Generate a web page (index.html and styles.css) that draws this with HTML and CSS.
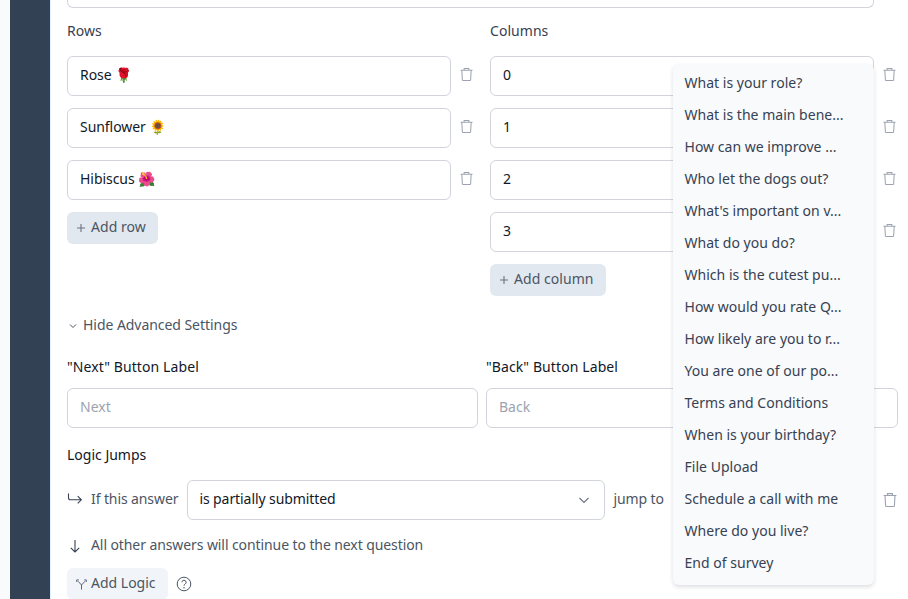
FILE: index.html
```html
<!DOCTYPE html>
<html lang="en">
<head>
<meta charset="utf-8">
<title>Matrix question settings</title>
<link rel="stylesheet" href="styles.css">
</head>
<body>
<svg class="sprite" width="0" height="0" aria-hidden="true">
  <symbol id="trash" viewBox="0 0 16 16"><path d="M1.600 3.500h12.800M5.500 3.200V1.600h5v1.600M3 3.500l.6 10.200c0 .5.4.8.8.8h7.200c.4 0 .8-.3.8-.8L13 3.500" fill="none" stroke="currentColor" stroke-width="1.1"/></symbol>
  <symbol id="plus" viewBox="0 0 10 10"><path d="M5 1v8M1 5h8" fill="none" stroke="currentColor" stroke-width="1.1"/></symbol>
</svg>
<div class="app">
  <div class="rail"></div>
  <main class="main">
    <div class="stub"></div>
    <div class="matrix">
      <section class="col">
        <div class="label light">Rows</div>
        <div class="row"><div class="field">Rose 🌹</div><svg class="trash"><use href="#trash"/></svg></div>
        <div class="row"><div class="field">Sunflower 🌻</div><svg class="trash"><use href="#trash"/></svg></div>
        <div class="row"><div class="field">Hibiscus 🌺</div><svg class="trash"><use href="#trash"/></svg></div>
        <button class="add"><svg class="plus"><use href="#plus"/></svg>Add row</button>
      </section>
      <section class="col">
        <div class="label light">Columns</div>
        <div class="row"><div class="field">0</div><svg class="trash"><use href="#trash"/></svg></div>
        <div class="row"><div class="field">1</div><svg class="trash"><use href="#trash"/></svg></div>
        <div class="row"><div class="field">2</div><svg class="trash"><use href="#trash"/></svg></div>
        <div class="row"><div class="field">3</div><svg class="trash"><use href="#trash"/></svg></div>
        <button class="add"><svg class="plus"><use href="#plus"/></svg>Add column</button>
      </section>
    </div>
    <div class="toggle">
      <svg class="chev" viewBox="0 0 8 8"><path d="M1 2.500l3 3 3-3" fill="none" stroke="currentColor" stroke-width="1"/></svg>
      Hide Advanced Settings
    </div>
    <div class="buttons">
      <div class="btn-field">
        <div class="label">"Next" Button Label</div>
        <div class="field placeholder">Next</div>
      </div>
      <div class="btn-field">
        <div class="label">"Back" Button Label</div>
        <div class="field placeholder">Back</div>
      </div>
    </div>
    <div class="label logic-title">Logic Jumps</div>
    <div class="logic-row">
      <svg class="arrow" viewBox="0 0 16 16"><path d="M1.500 1.500v4.200c0 1.300.8 2.100 2.100 2.100h10.600M10.700 4.200l3.600 3.600-3.600 3.600" fill="none" stroke="currentColor" stroke-width="1.1"/></svg>
      <span class="text if">If this answer</span>
      <div class="select">is partially submitted
        <svg class="select-chev" viewBox="0 0 12 12"><path d="M1.500 4l4.500 4.500L10.500 4" fill="none" stroke="currentColor" stroke-width="1.1"/></svg>
      </div>
      <span class="text jump">jump to</span>
      <svg class="trash logic-trash"><use href="#trash"/></svg>
    </div>
    <div class="other">
      <svg class="arrow" viewBox="0 0 16 16"><path d="M8 3v12M3.800 10.800L8 15l4.200-4.200" fill="none" stroke="currentColor" stroke-width="1.1"/></svg>
      <span class="text">All other answers will continue to the next question</span>
    </div>
    <div class="logic-actions">
      <button class="add-logic">
        <svg class="fork" viewBox="0 0 12 12"><path d="M6 11.500V6.500L2.200 2.500M6 6.500l3.800-4M.8 3.200V1h2.200M11.200 3.200V1H9" fill="none" stroke="currentColor" stroke-width="1"/></svg>
        Add Logic
      </button>
      <svg class="help" viewBox="0 0 16 16"><circle cx="8" cy="8" r="6.800" fill="none" stroke="currentColor" stroke-width="1"/><path d="M5.900 6.300a2.100 2.100 0 1 1 3.200 1.800c-.7.4-1.100.8-1.100 1.600" fill="none" stroke="currentColor" stroke-width="1"/><circle cx="8" cy="11.700" r=".7" fill="currentColor"/></svg>
    </div>
  </main>
</div>
<ul class="menu">
  <li>What is your role?</li>
  <li>What is the main bene...</li>
  <li>How can we improve ...</li>
  <li>Who let the dogs out?</li>
  <li>What's important on v...</li>
  <li>What do you do?</li>
  <li>Which is the cutest pu...</li>
  <li>How would you rate Q...</li>
  <li>How likely are you to r...</li>
  <li>You are one of our po...</li>
  <li>Terms and Conditions</li>
  <li>When is your birthday?</li>
  <li>File Upload</li>
  <li>Schedule a call with me</li>
  <li>Where do you live?</li>
  <li>End of survey</li>
</ul>
</body>
</html>
```
FILE: styles.css
```css
* { box-sizing: border-box; }
html, body { margin: 0; height: 100%; overflow: hidden; }
body {
  position: relative;
  background: #fff;
  color: #1f2937;
  font: 14px/20px "Noto Sans", "Noto Color Emoji", sans-serif;
}
.sprite { position: absolute; }
.app { display: flex; height: 599px; padding-left: 10px; background: #f8fafc; }
.rail { width: 40px; flex: none; background: #334155; }
.main { flex: 1; min-width: 0; background: #fff; border-left: 1px solid #e0f2fe; padding-left: 16px; }
.stub {
  width: 807px; height: 8px;
  border: 1px solid #d1d5db; border-top: 0;
  border-radius: 0 0 6px 6px;
}
.matrix { display: grid; grid-template-columns: 407px 407px; column-gap: 16px; margin-top: 13px; }
.col { display: flex; flex-direction: column; align-items: flex-start; }
.label { color: #111827; line-height: 20px; }
.label.light { color: #374151; margin-bottom: 15px; letter-spacing: .05px; }
.row { display: flex; align-items: center; width: 100%; margin-bottom: 12px; }
.field {
  height: 40px; flex: 1;
  padding: 0 12px;
  border: 1px solid #d1d5db;
  border-radius: 6px;
  background: #fff;
  color: #111827;
  line-height: 36px;
  letter-spacing: -.05px;
}
.row .trash { margin-left: 8px; position: relative; top: -2px; }
.trash { width: 15px; height: 15px; color: #9ca3af; flex: none; }
.add {
  display: flex; align-items: center;
  height: 32px; padding: 0 12px 2px 9px;
  border: 0; border-radius: 6px;
  background: #e2e8f0;
  color: #4b5563;
  font: inherit;
  letter-spacing: .05px;
}
.plus { width: 10px; height: 10px; margin: 2px 5px 0 0; color: #6b7280; }
.toggle {
  display: flex; align-items: center;
  margin-top: 19px; height: 20px;
  color: #4b5563;
  letter-spacing: -.05px;
}
.chev { width: 8px; height: 8px; margin: 1px 6px 0 2px; color: #4b5563; }
.buttons { display: grid; grid-template-columns: 411px 412px; column-gap: 8px; margin-top: 22px; }
.btn-field { display: flex; flex-direction: column; }
.btn-field .label { margin-bottom: 11px; letter-spacing: .1px; }
.btn-field .field { flex: none; letter-spacing: 0; }
.placeholder { color: #9ca3af; }
.logic-title { margin-top: 17px; }
.logic-row { display: flex; align-items: center; height: 40px; margin-top: 15px; position: relative; }
.arrow { width: 16px; height: 16px; color: #374151; flex: none; }
.text { color: #4b5563; letter-spacing: -.1px; position: relative; top: -1px; }
.if { margin-left: 8px; }
.select {
  position: relative;
  width: 418px; height: 40px;
  margin-left: 9px;
  padding: 0 11px;
  border: 1px solid #d1d5db;
  border-radius: 6px;
  color: #111827;
  line-height: 36px;
  letter-spacing: -.08px;
}
.select-chev { position: absolute; right: 14px; top: 13px; width: 12px; height: 12px; color: #6b7280; }
.jump { margin-left: 8px; }
.logic-trash { position: absolute; left: 815px; top: 12px; width: 16px; height: 16px; }
.other { display: flex; align-items: center; height: 20px; margin-top: 15px; }
.other .text { margin-left: 8px; top: 0; letter-spacing: -.09px; }
.logic-actions { display: flex; align-items: center; margin-top: 13px; }
.add-logic {
  display: flex; align-items: center;
  width: 101px; height: 32px; padding: 0 0 2px 9px;
  border: 0; border-radius: 6px;
  background: #f1f5f9;
  color: #4b5563;
  font: inherit;
}
.fork { width: 11px; height: 11px; margin: 3px 4px 0 0; color: #4b5563; }
.help { width: 16px; height: 16px; margin-left: 8px; color: #4b5563; }
.menu {
  position: absolute; left: 672.500px; top: 64px;
  width: 201.500px; margin: 0; padding: 3px 0 6px;
  list-style: none;
  background: #f8fafc;
  border-radius: 6px;
  box-shadow: 0 2px 4px rgba(15, 23, 42, .14);
  color: #374151;
  letter-spacing: .02px;
}
.menu li { height: 32px; padding: 0 12px; line-height: 32px; white-space: nowrap; }
```
